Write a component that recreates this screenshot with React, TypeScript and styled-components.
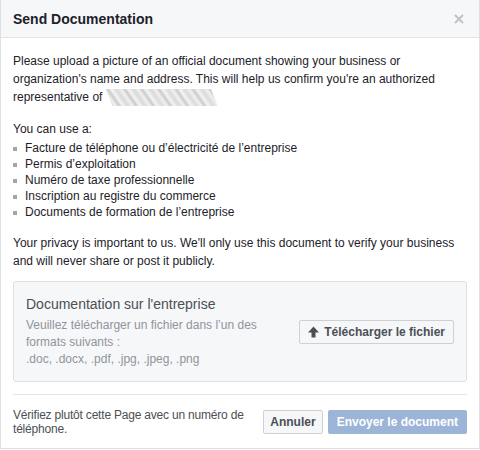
import styled, { createGlobalStyle } from "styled-components";

const GlobalStyle = createGlobalStyle`
  html, body {
    margin: 0;
    padding: 0;
    background: #ffffff;
  }
  body {
    font-family: "Liberation Sans", Arial, sans-serif;
    font-size: 12px;
    color: #1d2129;
  }
`;

const Dialog = styled.div`
  width: 480px;
  box-sizing: border-box;
  background: #fff;
  border: 1px solid #dddfe2;
  border-top: none;
  display: flex;
  flex-direction: column;
`;

const Header = styled.div`
  height: 38px;
  flex-shrink: 0;
  box-sizing: border-box;
  display: flex;
  align-items: center;
  justify-content: space-between;
  padding: 0 12px 0 12px;
  background: #f6f7f9;
  border-bottom: 1px solid #e5e5e5;
`;

const Title = styled.div`
  font-size: 14px;
  font-weight: bold;
  color: #1d2129;
  line-height: 18px;
`;

const Close = styled.button`
  width: 16px;
  height: 16px;
  padding: 0;
  border: none;
  background: none;
  display: flex;
  align-items: center;
  justify-content: center;
  cursor: pointer;
`;

const Body = styled.div`
  padding: 14px 12px 0;
  display: flex;
  flex-direction: column;
`;

const Para = styled.p<{ gap?: number }>`
  margin: 0 0 ${({ gap }) => gap ?? 14}px;
  line-height: 18px;
`;

const Redacted = styled.span`
  display: inline-block;
  width: 112px;
  height: 17px;
  vertical-align: -5px;
  background: repeating-linear-gradient(
    55deg,
    #f3f3f3 0px,
    #dadada 4px,
    #f0f0f0 8px,
    #cbcbcb 11px,
    #f5f5f5 14px
  );
  clip-path: polygon(0 0, 94% 0, 100% 100%, 6% 100%);
`;

const List = styled.ul`
  margin: 0 0 14px;
  padding: 0;
  list-style: none;
`;

const Item = styled.li`
  position: relative;
  line-height: 16px;
  padding-left: 12px;
  &::before {
    content: "";
    position: absolute;
    left: 0px;
    top: 7px;
    width: 4px;
    height: 4px;
    background: #a0a4ab;
  }
`;

const UploadBox = styled.div`
  margin-top: -3px;
  display: flex;
  align-items: center;
  gap: 20px;
  padding: 13px 12px 13px;
  background: #f6f7f9;
  border: 1px solid #dddfe2;
  border-radius: 3px;
`;

const UploadText = styled.div`
  flex: 1;
`;

const BoxTitle = styled.div`
  font-size: 14px;
  line-height: 18px;
  color: #4b4f56;
  margin-bottom: 4px;
`;

const BoxSub = styled.div`
  color: #90949c;
  line-height: 17px;
`;

const Button = styled.button<{ primary?: boolean; pad?: number }>`
  height: 24px;
  flex-shrink: 0;
  box-sizing: border-box;
  padding: 0 ${({ pad }) => pad ?? 8}px;
  display: inline-flex;
  align-items: center;
  gap: 5px;
  font-family: "Liberation Sans", Arial, sans-serif;
  font-size: 12px;
  font-weight: bold;
  border-radius: 2px;
  white-space: nowrap;
  cursor: pointer;
  color: ${({ primary }) => (primary ? "#ffffff" : "#4b4f56")};
  background: ${({ primary }) => (primary ? "#9cb4d8" : "#f6f7f9")};
  border: 1px solid ${({ primary }) => (primary ? "#9cb4d8" : "#ced0d4")};
`;

const Footer = styled.div`
  margin-top: 12px;
  border-top: 1px solid #e5e5e5;
  display: flex;
  align-items: center;
  padding: 13px 0 12px;
`;

const FooterText = styled.div`
  flex: 1;
  min-width: 0;
  color: #4b4f56;
  line-height: 14px;
  letter-spacing: -0.2px;
  white-space: nowrap;
`;

const Actions = styled.div`
  display: flex;
  flex-shrink: 0;
  gap: 5px;
`;

const CloseIcon = () => (
  <svg width="10" height="10" viewBox="0 0 10 10">
    <path d="M1 1L9 9M9 1L1 9" stroke="#bec2c9" strokeWidth="2" />
  </svg>
);

const UploadIcon = () => (
  <svg width="11" height="12" viewBox="0 0 11 12">
    <path d="M5.5 0.5L11 6.5H7.5V11.5H3.5V6.5H0Z" fill="#4b4f56" />
  </svg>
);

const items = [
  "Facture de téléphone ou d’électricité de l’entreprise",
  "Permis d’exploitation",
  "Numéro de taxe professionnelle",
  "Inscription au registre du commerce",
  "Documents de formation de l’entreprise",
];

export default function App() {
  return (
    <>
      <GlobalStyle />
      <Dialog>
        <Header>
          <Title>Send Documentation</Title>
          <Close aria-label="Close">
            <CloseIcon />
          </Close>
        </Header>
        <Body>
          <Para>
            Please upload a picture of an official document showing your business or
            organization's name and address. This will help us confirm you're an authorized
            representative of <Redacted />
          </Para>
          <Para gap={2}>You can use a:</Para>
          <List>
            {items.map((t) => (
              <Item key={t}>{t}</Item>
            ))}
          </List>
          <Para>
            Your privacy is important to us. We'll only use this document to verify your business
            and will never share or post it publicly.
          </Para>
          <UploadBox>
            <UploadText>
              <BoxTitle>Documentation sur l'entreprise</BoxTitle>
              <BoxSub>
                Veuillez télécharger un fichier dans l’un des formats suivants :
                <br />
                .doc, .docx, .pdf, .jpg, .jpeg, .png
              </BoxSub>
            </UploadText>
            <Button pad={8}>
              <UploadIcon />
              Télécharger le fichier
            </Button>
          </UploadBox>
          <Footer>
            <FooterText>
              Vérifiez plutôt cette Page avec un numéro de
              <br />
              téléphone.
            </FooterText>
            <Actions>
              <Button pad={6}>Annuler</Button>
              <Button primary>Envoyer le document</Button>
            </Actions>
          </Footer>
        </Body>
      </Dialog>
    </>
  );
}
